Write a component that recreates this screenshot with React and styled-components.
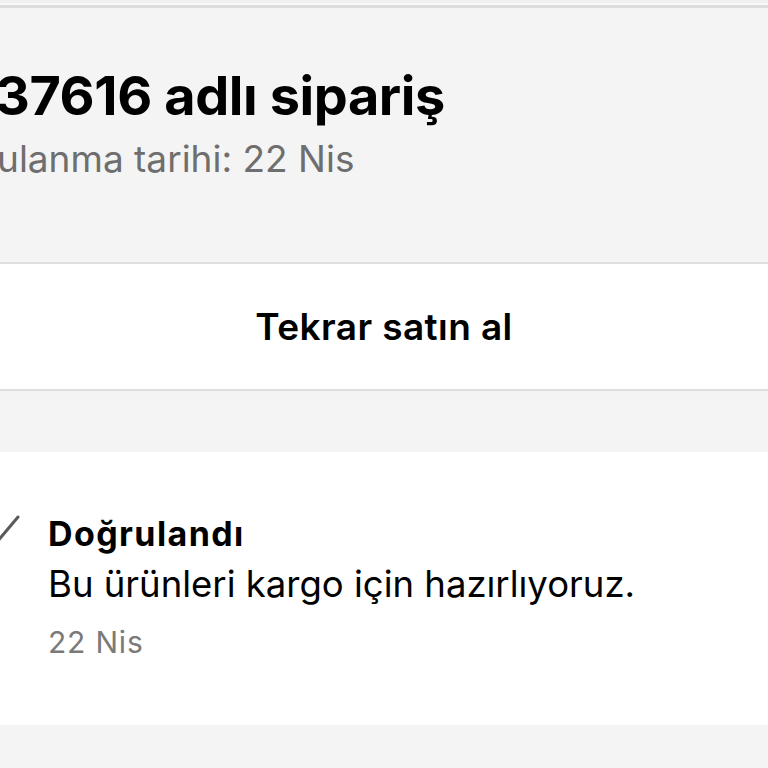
import styled, { createGlobalStyle } from "styled-components";

const GlobalStyle = createGlobalStyle`
  html, body {
    margin: 0;
    padding: 0;
    background: #f4f4f4;
    font-family: Inter, "Noto Sans", "Liberation Sans", sans-serif;
    -webkit-font-smoothing: antialiased;
  }
  #root {
    width: 768px;
    height: 768px;
    overflow: hidden;
  }
`;

const Page = styled.div`
  width: 768px;
  min-height: 768px;
  background: #f4f4f4;
  display: flex;
  flex-direction: column;
`;

const TopEdge = styled.div`
  height: 5px;
  background: linear-gradient(#f0f0f0 0 3px, #f9f9f9 3px);
  border-bottom: 3px solid #dcdcdc;
`;

const Header = styled.header`
  height: 254px;
  padding-top: 56px;
  box-sizing: border-box;
  overflow: hidden;
`;

const Title = styled.h1`
  margin: 0;
  font-size: 54px;
  font-weight: 700;
  line-height: 64px;
  color: #000;
  letter-spacing: -0.4px;
  white-space: nowrap;
  text-indent: -5px;
`;

const Subtitle = styled.p`
  margin: 7px 0 0;
  font-size: 37px;
  font-weight: 400;
  line-height: 48px;
  color: #6e6e6e;
  white-space: nowrap;
  text-indent: -3px;
`;

const Section = styled.section`
  background: #fff;
  border-top: ${(p) => (p.$lined ? "2px solid #dedede" : "none")};
  border-bottom: ${(p) => (p.$lined ? "2px solid #dedede" : "none")};
`;

const ActionButton = styled.button`
  display: block;
  width: 100%;
  height: 125px;
  border: none;
  background: transparent;
  font-family: inherit;
  font-size: 37px;
  font-weight: 600;
  color: #000;
  letter-spacing: 0.4px;
  padding: 0;
  cursor: pointer;
`;

const Gap = styled.div`
  height: ${(p) => p.$h}px;
`;

const Event = styled.div`
  display: flex;
  align-items: flex-start;
  height: 273px;
  box-sizing: border-box;
  padding-top: 60px;
`;

const Marker = styled.div`
  width: 48px;
  flex: none;
  margin-left: -15px;
  padding-top: 2px;
  svg {
    display: block;
  }
`;

const EventBody = styled.div`
  display: flex;
  flex-direction: column;
  padding-left: 15px;
`;

const EventTitle = styled.div`
  font-size: 34px;
  font-weight: 700;
  line-height: 44px;
  letter-spacing: 1.4px;
  color: #000;
`;

const EventText = styled.div`
  font-size: 36.5px;
  line-height: 56px;
  color: #000;
`;

const EventDate = styled.div`
  font-size: 30px;
  line-height: 46px;
  margin-top: 7px;
  letter-spacing: 0.8px;
  color: #7a7a7a;
`;

export default function App() {
  return (
    <>
      <GlobalStyle />
      <Page>
        <TopEdge />
        <Header>
          <Title>37616 adlı sipariş</Title>
          <Subtitle>ulanma tarihi: 22 Nis</Subtitle>
        </Header>
        <Section $lined>
          <ActionButton>Tekrar satın al</ActionButton>
        </Section>
        <Gap $h={61} />
        <Section>
          <Event>
            <Marker>
              <svg width="40" height="36" viewBox="0 0 40 36">
                <path
                  d="M4 20 L12 28 L33 3"
                  fill="none"
                  stroke="#5a5a5a"
                  strokeWidth="3"
                  strokeLinecap="round"
                  strokeLinejoin="round"
                />
              </svg>
            </Marker>
            <EventBody>
              <EventTitle>Doğrulandı</EventTitle>
              <EventText>Bu ürünleri kargo için hazırlıyoruz.</EventText>
              <EventDate>22 Nis</EventDate>
            </EventBody>
          </Event>
        </Section>
      </Page>
    </>
  );
}
